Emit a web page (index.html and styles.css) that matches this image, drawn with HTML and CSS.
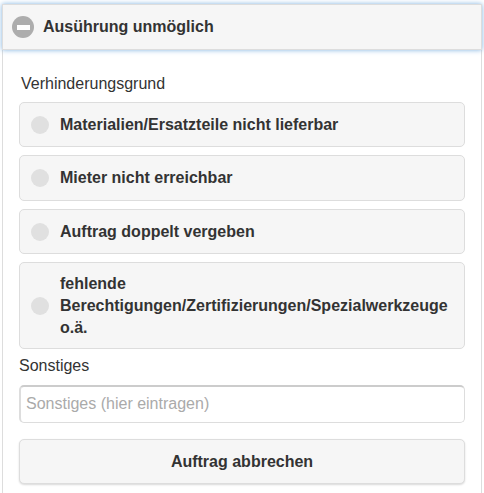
FILE: index.html
```html
<!DOCTYPE html>
<html lang="de">
<head>
    <meta charset="UTF-8">
    <title>Ausführung unmöglich</title>
    <link rel="stylesheet" href="styles.css">
</head>
<body>

<div class="panel">
    <div class="panel-header">
        <span class="minus-icon"><span class="minus-bar"></span></span>
        <h1>Ausührung unmöglich</h1>
    </div>

    <div class="panel-body">
        <p class="reason-label">Verhinderungsgrund</p>

        <div class="option"><span class="radio"></span><span>Materialien/Ersatzteile nicht lieferbar</span></div>
        <div class="option"><span class="radio"></span><span>Mieter nicht erreichbar</span></div>
        <div class="option"><span class="radio"></span><span>Auftrag doppelt vergeben</span></div>
        <div class="option option-tall"><span class="radio"></span><span>fehlende Berechtigungen/Zertifizierungen/Spezialwerkzeuge o.ä.</span></div>

        <p class="other-label">Sonstiges</p>
        <input type="text" class="input-field" placeholder="Sonstiges (hier eintragen)">
        <button class="btn">Auftrag abbrechen</button>
    </div>
</div>

</body>
</html>
```

FILE: styles.css
```css
* {
    box-sizing: border-box;
    margin: 0;
    padding: 0;
    font-family: "Liberation Sans", Arial, sans-serif;
}

body {
    background: #fff;
    color: #333;
    padding: 4px 2px 0;
    height: 493px;
    overflow: hidden;
}

.panel {
    width: 480px;
    height: 489px;
    border-left: 1px solid #ddd;
    border-right: 1px solid #ddd;
}

.panel-header {
    display: flex;
    align-items: center;
    gap: 9px;
    height: 46px;
    margin: 0 -1px;
    padding-left: 9px;
    background: #f6f6f6;
    border: 1px solid #ddd;
    box-shadow: 0 0 5px #7fb2e0;
}

.panel-header h1 {
    font-size: 16px;
    font-weight: bold;
}

.minus-icon {
    display: flex;
    align-items: center;
    justify-content: center;
    width: 22px;
    height: 22px;
    border-radius: 50%;
    background: #adadad;
}

.minus-bar {
    width: 13px;
    height: 5px;
    background: #fff;
}

.panel-body {
    padding: 0 16px;
}

.reason-label {
    font-size: 16px;
    line-height: 18px;
    margin: 25px 0 9.08px 2px;
}

.option {
    display: flex;
    align-items: center;
    gap: 11px;
    height: 45.4px;
    margin-bottom: 8px;
    padding: 0 12px 0 11px;
    background: #f6f6f6;
    border: 1px solid #ddd;
    border-radius: 5px;
    font-size: 16px;
    font-weight: bold;
    line-height: 22px;
}

.option-tall {
    height: 86.92px;
}

.radio {
    flex: none;
    width: 18px;
    height: 18px;
    border-radius: 50%;
    background: #e0e0e0;
}

.other-label {
    font-size: 16px;
    line-height: 18px;
    margin: 0 0 10px;
}

.input-field {
    display: block;
    width: 100%;
    height: 38px;
    padding: 0 5px 2px;
    background: #fff;
    border: 1px solid #ddd;
    border-top: 2px solid #ccc;
    border-left: 2px solid #ddd;
    border-radius: 5px;
    font-size: 16px;
    outline: none;
}

.input-field::placeholder {
    color: #aaa;
}

.btn {
    display: block;
    width: 100%;
    height: 45px;
    margin-top: 16px;
    background: #f6f6f6;
    color: #333;
    border: 1px solid #ddd;
    border-radius: 5px;
    box-shadow: 0 1px 2px rgba(0, 0, 0, 0.15);
    font-size: 16px;
    font-weight: bold;
}
```
